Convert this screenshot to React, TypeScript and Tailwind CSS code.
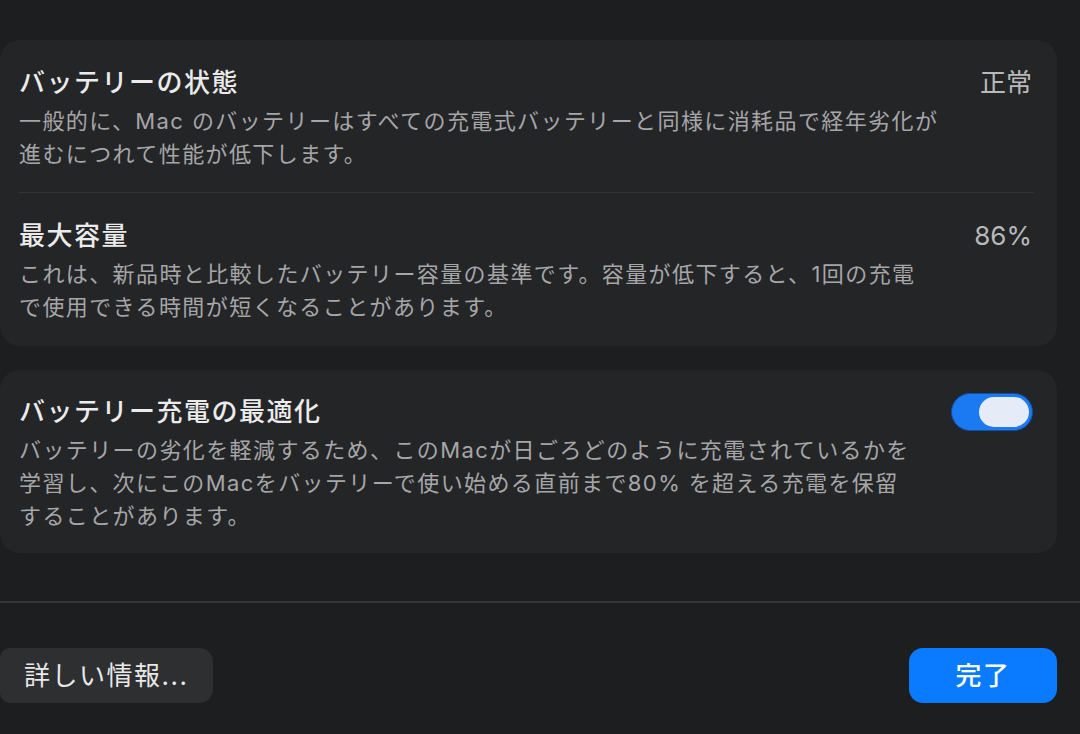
import React from 'react';

const font = { fontFamily: '"Inter", "Noto Sans CJK JP", sans-serif' };

interface RowProps {
  title: string;
  lines: string[];
  value?: string;
  toggle?: boolean;
  className?: string;
}

const Toggle: React.FC = () => (
  <div className="w-[82px] h-[38px] rounded-full bg-[#1b79f2] border border-[#0f4fa8] flex items-center justify-end pr-[3px] shrink-0">
    <div className="w-[50px] h-[30px] rounded-full bg-[#e6ecf7]" />
  </div>
);

const Row: React.FC<RowProps> = ({ title, lines, value, toggle, className }) => (
  <div className={`flex justify-between items-start ${className || ''}`}>
    <div>
      <div className="text-[26px] leading-[36px] tracking-[1.5px] text-[#ebebeb] font-medium">{title}</div>
      <div className="mt-[4px] text-[22px] leading-[33px] tracking-[1.4px] text-[#a6a6a8]">
        {lines.map((l, i) => (
          <div key={i} className="whitespace-nowrap">{l}</div>
        ))}
      </div>
    </div>
    {value && <div className="text-[26px] leading-[36px] text-[#b9b9bb]">{value}</div>}
    {toggle && <div className="-mt-[1px]"><Toggle /></div>}
  </div>
);

export default function App() {
  return (
    <div className="w-[1080px] h-[734px] bg-[#1d1e20] overflow-hidden flex flex-col" style={font}>
      <div className="h-[40px] shrink-0" />

      {/* Battery health card */}
      <div className="w-[1057px] bg-[#242527] rounded-[20px] pl-[19px] pr-[25px]">
        <Row
          className="pt-[25px] pb-[21px]"
          title="バッテリーの状態"
          value="正常"
          lines={[
            '一般的に、Mac のバッテリーはすべての充電式バッテリーと同様に消耗品で経年劣化が',
            '進むにつれて性能が低下します。',
          ]}
        />
        <div className="h-px bg-[#333436] -mr-[2px]" />
        <Row
          className="pt-[25px] pb-[22px]"
          title="最大容量"
          value="86%"
          lines={[
            'これは、新品時と比較したバッテリー容量の基準です。容量が低下すると、1回の充電',
            'で使用できる時間が短くなることがあります。',
          ]}
        />
      </div>

      {/* Optimized charging card */}
      <div className="mt-[24px] w-[1057px] bg-[#242527] rounded-[20px] pl-[19px] pr-[24px]">
        <Row
          className="pt-[24px] pb-[20px]"
          title="バッテリー充電の最適化"
          toggle
          lines={[
            'バッテリーの劣化を軽減するため、このMacが日ごろどのように充電されているかを',
            '学習し、次にこのMacをバッテリーで使い始める直前まで80% を超える充電を保留',
            'することがあります。',
          ]}
        />
      </div>

      <div className="mt-[48px] h-[2px] bg-[#343537] shrink-0" />

      <div className="mt-[45px] flex justify-between items-center pr-[23px]">
        <button className="w-[213px] h-[55px] rounded-r-[14px] rounded-l-[10px] bg-[#2e2f31] text-[26px] tracking-[1.5px] text-[#e8e8e8] text-left pl-[24px]">
          詳しい情報...
        </button>
        <button className="w-[148px] h-[55px] rounded-[14px] bg-[#0a7bff] text-[26px] tracking-[1.5px] text-white font-medium">
          完了
        </button>
      </div>
    </div>
  );
}
